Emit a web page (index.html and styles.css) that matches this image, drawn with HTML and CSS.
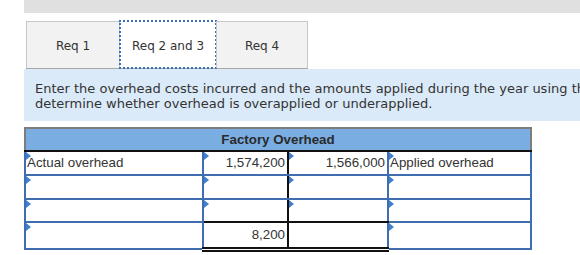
FILE: index.html
```html
<!DOCTYPE html>
<html>
<head>
<meta charset="utf-8">
<link rel="stylesheet" href="styles.css">
</head>
<body>
<div class="page">
  <div class="topbar"></div>
  <div class="tabs">
    <div class="tab">Req 1</div>
    <div class="tab active">Req 2 and 3</div>
    <div class="tab last">Req 4</div>
  </div>
  <div class="info">
    <div class="line">Enter the overhead costs incurred and the amounts applied during the year using the T-account to</div>
    <div class="line">determine whether overhead is overapplied or underapplied.</div>
  </div>
  <table class="ledger">
    <colgroup>
      <col class="w1"><col class="w2"><col class="w3"><col class="w4">
    </colgroup>
    <tr class="hrow"><th colspan="4" class="head">Factory Overhead</th></tr>
    <tr class="row r1">
      <td class="cell c1 left"><span class="flag"></span>Actual overhead</td>
      <td class="cell c2 num"><span class="flag"></span>1,574,200</td>
      <td class="cell c3 num"><span class="flag"></span>1,566,000</td>
      <td class="cell c4 left"><span class="flag"></span>Applied overhead</td>
    </tr>
    <tr class="row r2">
      <td class="cell c1"><span class="flag"></span></td>
      <td class="cell c2"><span class="flag"></span></td>
      <td class="cell c3"><span class="flag"></span></td>
      <td class="cell c4"><span class="flag"></span></td>
    </tr>
    <tr class="row r3">
      <td class="cell c1"><span class="flag"></span></td>
      <td class="cell c2"><span class="flag"></span></td>
      <td class="cell c3"><span class="flag"></span></td>
      <td class="cell c4"><span class="flag"></span></td>
    </tr>
    <tr class="row r4">
      <td class="cell c1"><span class="flag"></span></td>
      <td class="cell c2 total num">8,200</td>
      <td class="cell c3 total"></td>
      <td class="cell c4"><span class="flag"></span></td>
    </tr>
  </table>
</div>
</body>
</html>
```

FILE: styles.css
```css
html, body {
  margin: 0;
  padding: 0;
  background: #ffffff;
  overflow: hidden;
}
.page {
  width: 556px;
  margin-left: 24px;
  font-family: "DejaVu Sans", Verdana, sans-serif;
  color: #333333;
}
.topbar {
  height: 13px;
  background: #e0e0e0;
}
.tabs {
  display: flex;
  margin-top: 8px;
  margin-left: 2px;
  height: 47px;
  border-bottom: 1px solid #a8a8a8;
  width: 282px;
}
.tab {
  box-sizing: border-box;
  width: 94px;
  height: 47px;
  background: #f2f2f2;
  border: 1px solid #c8c8c8;
  border-bottom: none;
  display: flex;
  align-items: center;
  justify-content: center;
  padding-top: 1px;
  font-size: 12px;
  color: #333;
}
.tab.active {
  width: 96px;
  background: #ffffff;
  outline: 2px dotted #3a6fb8;
  outline-offset: -1px;
  border-color: #ffffff;
}
.tab.last {
  width: 92px;
}
.info {
  background: #dbeaf8;
  height: 52px;
  box-sizing: border-box;
  padding: 12px 0 0 11px;
  overflow: hidden;
  font-size: 13px;
  line-height: 15px;
  color: #333;
}
.line {
  white-space: nowrap;
}
.ledger {
  margin-top: 6px;
  border-collapse: collapse;
  table-layout: fixed;
  width: 506px;
  font-family: "Liberation Sans", Arial, sans-serif;
  font-size: 13.33px;
  color: #333;
}
.w1 { width: 178px; }
.w2 { width: 85px; }
.w3 { width: 100px; }
.w4 { width: 143px; }
.hrow { height: 23px; }
.head {
  padding: 0;
  background: #7aaee2;
  border: 2px solid #7d7d7d;
  border-bottom: 2px solid #111;
  text-align: center;
  font-weight: bold;
  line-height: 20px;
  color: #2a2a2a;
}
.row { height: 24px; }
.row.r3 { height: 23px; }
.row.r4 { height: 27px; }
.cell {
  position: relative;
  padding: 0;
  border: 2px solid #3f6daf;
  background: #fff;
  white-space: nowrap;
  overflow: hidden;
  line-height: 18px;
  vertical-align: middle;
}
.c2 { border-right-color: #111; }
.r1 .c2, .r1 .c3 { border-top-color: #111; }
.r3 .c2, .r3 .c3 { border-bottom-color: #111; }
.left { padding-left: 1px; }
.num {
  text-align: right;
  padding-right: 2px;
}
.total {
  border-top: 2px solid #111;
  border-bottom: 5px double #111;
}
.c3.total {
  border-right: 2px solid #3f6daf;
}
.c2.total {
  border-right: 2px solid #111;
}
.flag {
  position: absolute;
  left: 0;
  top: 0;
  width: 0;
  height: 0;
  border-top: 4px solid transparent;
  border-bottom: 4px solid transparent;
  border-left: 5px solid #3f7fd0;
}
```
